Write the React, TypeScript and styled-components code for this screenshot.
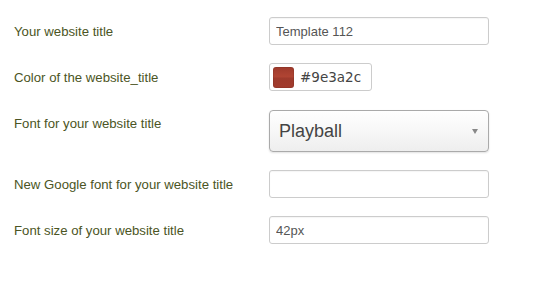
import React from 'react';
import styled, {createGlobalStyle} from "styled-components";

const GlobalStyle = createGlobalStyle`
  html, body {
    margin: 0;
    padding: 0;
    background: #ffffff;
  }
  body {
    font-family: "Liberation Sans", Arial, sans-serif;
  }
`;

const Form = styled.form`
  display: grid;
  grid-template-columns: 255px 220px;
  row-gap: 18px;
  padding: 17px 0 0 14px;
`;

const Label = styled.label`
  font-size: 13.2px;
  line-height: 18px;
  color: #4b5524;
  padding-top: 6px;
`;

const TextInput = styled.input`
  box-sizing: border-box;
  width: 220px;
  height: 28px;
  margin: 0;
  padding: 0 6px;
  border: 1px solid #cccccc;
  border-radius: 3px;
  box-shadow: inset 0 1px 1px rgba(0, 0, 0, 0.04);
  font-family: "Liberation Sans", Arial, sans-serif;
  font-size: 13px;
  color: #555555;
  background: #ffffff;
  outline: none;
`;

const ColorBox = styled.div`
  box-sizing: border-box;
  width: 103px;
  height: 28px;
  display: flex;
  align-items: center;
  gap: 6px;
  padding: 0 3px;
  border: 1px solid #cccccc;
  border-radius: 3px;
`;

const Swatch = styled.span<{ $color: string }>`
  display: block;
  width: 21px;
  height: 21px;
  border-radius: 3px;
  background: linear-gradient(${p => p.$color} 0%, #b04433 45%, ${p => p.$color} 55%, #a23b2d 100%);
  box-shadow: inset 0 0 0 1px rgba(0, 0, 0, 0.08);
`;

const ColorValue = styled.span`
  font-family: "DejaVu Sans", sans-serif;
  font-size: 13.5px;
  color: #444444;
`;

const SelectBox = styled.div`
  box-sizing: border-box;
  width: 220px;
  height: 42px;
  margin-top: 1px;
  display: flex;
  align-items: center;
  justify-content: space-between;
  padding: 0 10px 0 9px;
  border: 1px solid #aaaaaa;
  border-radius: 4px;
  background: linear-gradient(#ffffff 0%, #f8f8f8 45%, #eeeeee 100%);
  box-shadow: 0 1px 2px rgba(0, 0, 0, 0.12);
  font-size: 18px;
  color: #444444;
`;

const Arrow = styled.span`
  width: 0;
  height: 0;
  border-left: 3.5px solid transparent;
  border-right: 3.5px solid transparent;
  border-top: 5px solid #888888;
  margin-top: 1px;
`;

function App(): React.JSX.Element {
  return (
    <>
      <GlobalStyle/>
      <Form>
        <Label>Your website title</Label>
        <TextInput defaultValue="Template 112"/>

        <Label>Color of the website_title</Label>
        <ColorBox>
          <Swatch $color="#9e3a2c"/>
          <ColorValue>#9e3a2c</ColorValue>
        </ColorBox>

        <Label>Font for your website title</Label>
        <SelectBox>
          <span>Playball</span>
          <Arrow/>
        </SelectBox>

        <Label>New Google font for your website title</Label>
        <TextInput defaultValue=""/>

        <Label>Font size of your website title</Label>
        <TextInput defaultValue="42px"/>
      </Form>
    </>
  )
}

export default App;
